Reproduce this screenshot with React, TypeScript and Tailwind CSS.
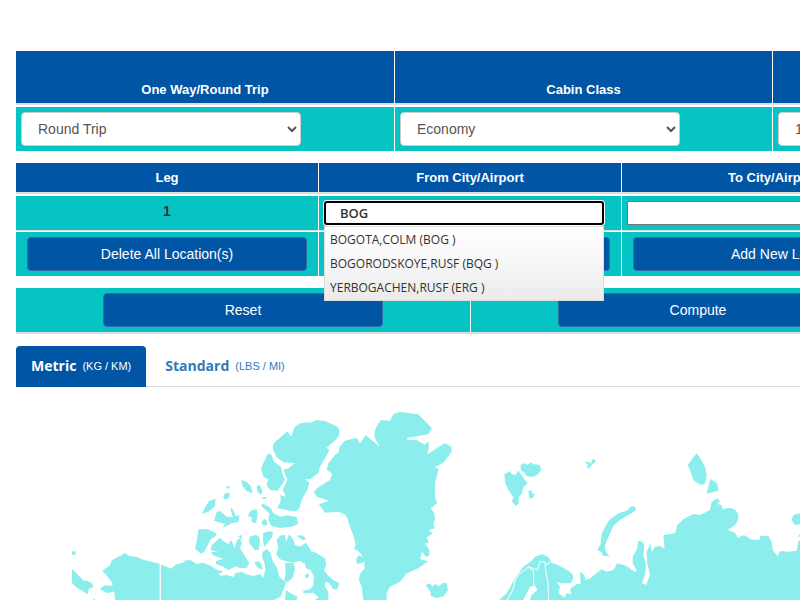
import React from "react";

const selectClass =
  "block h-[34px] w-[280px] rounded border border-[#cccccc] bg-white px-3 text-sm text-[#555555]";
const buttonClass =
  "block h-[34px] w-[280px] mx-auto rounded border border-[#2e6da4] bg-[#0055a5] text-center text-sm text-white";
const headClass =
  "border-r border-b-2 border-r-white border-b-[#dddddd] bg-[#0055a5] text-[13px] font-bold leading-5 text-white";
const cellClass = "border-r border-white bg-[#06c4c4] p-[5px] align-top";

function TripOptions() {
  return (
    <table className="w-[1136px] table-fixed border-separate border-spacing-0">
      <colgroup>
        <col className="w-[379px]" />
        <col className="w-[378px]" />
        <col className="w-[379px]" />
      </colgroup>
      <thead>
        <tr className="h-[54px]">
          <th scope="col" id="trip" className={`${headClass} pb-[3px] align-bottom`}>One Way/Round Trip</th>
          <th scope="col" id="cabin" className={`${headClass} pb-[3px] align-bottom`}>Cabin Class</th>
          <th scope="col" className={`${headClass} pb-[3px] align-bottom`} />
        </tr>
      </thead>
      <tbody>
        <tr>
          <td className={`${cellClass} border-t-2`}>
            <select aria-labelledby="trip" className={selectClass}>
              <option>Round Trip</option>
            </select>
          </td>
          <td className={`${cellClass} border-t-2`}>
            <select aria-labelledby="cabin" className={selectClass}>
              <option>Economy</option>
            </select>
          </td>
          <td className={`${cellClass} border-t-2`}>
            <select aria-label="Passengers" className={selectClass}>
              <option>1</option>
            </select>
          </td>
        </tr>
      </tbody>
    </table>
  );
}

const suggestions = [
  "BOGOTA,COLM (BOG )",
  "BOGORODSKOYE,RUSF (BQG )",
  "YERBOGACHEN,RUSF (ERG )",
];

function Legs() {
  return (
    <table className="mt-3 w-[909px] table-fixed border-separate border-spacing-0">
      <thead>
        <tr className="h-[31px]">
          <th scope="col" className={headClass}>Leg</th>
          <th scope="col" id="from" className={headClass}>From City/Airport</th>
          <th scope="col" id="to" className={headClass}>To City/Airport</th>
        </tr>
      </thead>
      <tbody>
        <tr>
          <td className={`${cellClass} border-t-2 border-b border-b-[#dddddd] text-center text-sm font-bold leading-5 text-[#333333]`}>
            1
          </td>
          <td className={`${cellClass} border-t-2 border-b border-b-[#dddddd]`}>
            <div className="relative">
              <input
                aria-labelledby="from"
                defaultValue="BOG"
                className="block h-6 w-[280px] rounded-[3px] border-2 border-black bg-white px-[14px] font-['Open_Sans',sans-serif] text-[13px] font-semibold text-[#333333] ring-1 ring-white outline-none"
              />
              <ul className="absolute top-[25px] left-0 z-10 w-[280px] border border-[#dddddd] bg-linear-to-b from-white via-[#f6f6f6] to-[#ebebeb] pt-px font-['Open_Sans',sans-serif] text-xs leading-6 text-[#333333]">
                {suggestions.map((s) => (
                  <li key={s} className="px-[5px]">{s}</li>
                ))}
              </ul>
            </div>
          </td>
          <td className={`${cellClass} border-t-2 border-b border-b-[#dddddd]`}>
            <input
              aria-labelledby="to"
              className="block h-6 w-[280px] border border-[#767676] bg-white px-[14px] text-[13px] outline-none"
            />
          </td>
        </tr>
        <tr>
          <td className={`${cellClass} border-t`}>
            <button className={buttonClass}>Delete All Location(s)</button>
          </td>
          <td className={`${cellClass} border-t`}>
            <button aria-label="Delete location" className={buttonClass} />
          </td>
          <td className={`${cellClass} border-t`}>
            <button className={buttonClass}>Add New Leg</button>
          </td>
        </tr>
      </tbody>
    </table>
  );
}

function Actions() {
  return (
    <div className="mt-3 grid w-[910px] grid-cols-2 border-b-2 border-[#dddddd]">
      <div className={cellClass}>
        <button className={buttonClass}>Reset</button>
      </div>
      <div className={cellClass}>
        <button className={buttonClass}>Compute</button>
      </div>
    </div>
  );
}

function UnitTabs() {
  return (
    <nav className="mt-3 flex h-[41px] border-b border-[#dddddd] text-[11px] leading-5">
      <a href="#metric" className="flex h-[41px] gap-1.5 rounded-t bg-[#0055a5] px-[15px] py-[10px] text-white">
        <b className="font-['Open_Sans',sans-serif] text-sm leading-5">Metric</b>
        <span>(KG / KM)</span>
      </a>
      <a href="#standard" className="ml-1 flex gap-1.5 px-[15px] py-[10px] text-[#337ab7]">
        <b className="font-['Open_Sans',sans-serif] text-sm leading-5">Standard</b>
        <span>(LBS / MI)</span>
      </a>
    </nav>
  );
}

function WorldMap() {
  return (
    <svg
      role="img"
      aria-label="Map"
      viewBox="72 412 728 188"
      className="mt-[25px] ml-14 block h-[188px] w-[728px]"
      fill="#8beeec"
    >
      {/* Bering Strait, Alaska and the Canadian mainland */}
      <g transform="translate(60 400) scale(.333333)">
        <path d="M36 453l12 2-2 9-10 1zM36 507L50 520 72 544 78 541 96 549 100 560 86 567 83 583 68 574 48 562 36 550ZM98 600l6-5 2 5z" />
        <path d="M165 600L163 575 140 579 119 567 134 556 158 557 155 545 136 522 127 514 150 495 155 481 178 469 195 459 208 468 230 471 252 480 274 485 299 491 320 500 332 506 350 493 372 487 376 481 392 481 410 492 430 488 452 497 472 510 490 514 478 521 480 527 500 525 520 531 526 519 545 516 560 523 580 528 600 522 610 534 616 508 614 490 606 470 608 455 620 447 632 460 638 483 652 505 658 530 668 540 678 550 672 565 662 590 642 600Z" />
        <path d="M415 388L440 387 470 400 468 407 450 420 442 438 432 456 424 461 405 446 410 425Z" />
        <path d="M470 422L480 413 490 424 505 432 514 420 524 445 530 422 540 415 546 430 540 445 553 465 568 490 560 503 540 505 528 499 505 510 490 500 468 492 468 483 490 477 460 466 452 456 475 455 452 450 455 435Z" />
        <path d="M427 342L437 318 448 302 467 297 465 318 448 334ZM490 290l5-10 12-2 3 10-8 10-9 0zM497 262l8-5 5 5-6 5z" />
        <path d="M462 362L470 336 480 332 500 350 518 352 512 330 514 322 522 335 526 348 538 346 536 366 515 370 488 384 495 372 475 366ZM543 240L560 245 572 258 578 280 560 274 548 258Z" />
        <path d="M301 490V600" stroke="#fff" strokeWidth="4" />
      </g>
      {/* Canadian Arctic islands */}
      <g transform="translate(200 400) scale(.333333)">
        <path d="M170 257L180 256 188 275 183 284 172 275ZM186 291h14l-3 6-9-1zM146 340L156 330 170 328 173 345 168 370 155 366 155 350 145 350ZM150 410L165 405 176 408 180 425 176 450 164 450 152 435 146 425ZM115 408l12-3-3 14z" />
        <path d="M182 316L190 311 212 324 220 340 240 350 262 346 290 352 295 372 275 380 240 384 215 378 205 360 208 340ZM185 365l8-9 8 8v12h-14zM190 400L205 394 219 396 216 412 200 432 193 440 189 420ZM163 487l12-3 10 8 3 16-14-3z" />
        <path d="M204 160L215 165 222 185 243 200 248 225 255 240 245 255 232 272 210 270 200 255 205 238 190 230 183 205 190 190Z" />
        <path d="M219 148Q215 130 235 118L262 94 274 110 282 85Q290 70 318 67L330 69 350 60 375 63 400 74 414 82Q424 96 412 115L395 130 380 143 388 150 375 175 360 200 355 220 330 237 315 237 328 248 322 270 305 300 298 325 288 334 270 332 250 328 232 325 243 300 240 285 258 290 248 270 262 240 250 208 262 207 285 189 250 187 230 172Z" />
        <path d="M230 420L240 407 255 404 258 425 268 402 280 420 285 435 300 440 318 428 335 455 345 457 375 475 379 495 372 510 385 528 400 540 418 550 412 568 400 568 388 550 376 545 375 560 385 575 385 600 345 600 355 592 340 578 310 580 310 572 330 568 340 555 342 530 332 510 318 505 315 492 300 482 285 487 265 485 240 478 228 462 235 445ZM290 407l18-1 10 12-10 3z" />
        <path d="M255 490L280 487 285 505 280 530 265 545 252 545 257 520ZM315 525l8-5 5 7-5 8-7-2zM258 570L272 580 292 590 290 600 255 600Z" />
      </g>
      {/* Greenland and Iceland */}
      <g transform="translate(310 400) scale(.333333)">
        <path d="M160 600L155 560 147 540 150 522 164 505 163 485 153 490 140 492 139 475 146 466 160 472 150 458 140 450 132 447 137 435 130 405 120 380 112 355 Q105 337 80 336L45 338 27 313 58 302 20 290 12 275 25 262 60 240 67 222 50 208 55 190 75 165 86 157 88 140 105 122 140 113 150 130 167 105 185 120 209 140 195 115Q188 90 213 60L240 62 250 42 270 36 325 43 366 85 355 103 292 113 292 120 320 120 345 134 355 124 357 140 353 163 380 145 405 129 424 140 425 155 400 188 374 202 386 207 375 250 375 290 381 310 362 325 373 340 375 360 370 370 375 385 355 390 368 400 350 412 356 430 345 430 358 450 358 468 347 470 336 455 331 478 355 484 320 508 290 520 270 545 240 560 230 580 230 600Z" />
        <path d="M347 555L360 550 368 560 375 552 388 558 400 548 410 550 414 570 402 588 380 594 362 588 362 575Z" />
      </g>
      {/* Svalbard, Novaya Zemlya and northern Eurasia */}
      <g transform="translate(480 440) scale(.333333)">
        <path d="M73 103L90 93 95 103 108 104 114 91 128 110 143 130 130 142 126 160 116 172 116 190 108 198 96 185 100 172 85 150 76 130ZM121 75L135 70 142 75 153 67 160 73 178 74 184 88 175 103 158 111 140 108 133 97 123 92ZM146 153l8-3 2 8 8 5-5 10-12 3zM313 65L328 66 332 72 336 60 342 56 348 64 336 74 326 86 320 82 324 74Z" />
        <path d="M352 330L362 312 365 282 375 262 388 240 415 220 440 212 455 198 466 202 466 212 445 225 420 240 400 258 388 285 375 315 376 332 388 348 368 347 365 337Z" />
        <path d="M57 480L80 460 105 415 130 380 155 362 165 350 185 343 205 350 215 368 240 378 270 395Q288 410 272 430L245 430 230 425 240 440 236 460 253 473 260 460 275 462 270 447 290 432 302 432 300 395 313 405 316 420 330 415 365 388 380 395 400 390 412 370 440 378 465 397 470 390 458 370 458 350 472 325 474 302 488 305 493 315 490 345 498 375 496 400 486 430 498 435 510 405 502 370 500 335 512 310 515 337 525 320 540 318 554 327 550 285 585 280 592 255 610 238 640 222 660 225 690 210 695 185 712 175 720 183 712 192 725 195 728 208Q765 195 775 225 775 245 765 255L743 270 765 278 775 295Q790 275 810 298L838 300 842 287 865 288 875 305 878 330 892 348 900 333 925 335 950 332 955 305 960 300 960 480Z" />
        <path d="M650 40L658 50 675 80 680 105 675 132 660 134 640 120 632 95 623 75ZM691 117L712 130 715 152 680 161 685 140ZM960 220L940 225 935 240 945 255 960 253ZM960 282l-6 8h6z" />
        <path d="M130 480L150 440 165 437 172 450 155 465 150 480Z" fill="#fff" />
        <path d="M82 480L98 450 108 415 120 400 135 390 145 380 160 392 162 440M145 380L172 390 180 365 195 366 198 400 204 430 206 480M195 375L214 365" fill="none" stroke="#fff" strokeWidth="3" />
      </g>
    </svg>
  );
}

export default function App() {
  return (
    <main className="overflow-hidden bg-white pt-[51px] pl-4 font-['Liberation_Sans',Arial,sans-serif]">
      <TripOptions />
      <Legs />
      <Actions />
      <UnitTabs />
      <WorldMap />
    </main>
  );
}
